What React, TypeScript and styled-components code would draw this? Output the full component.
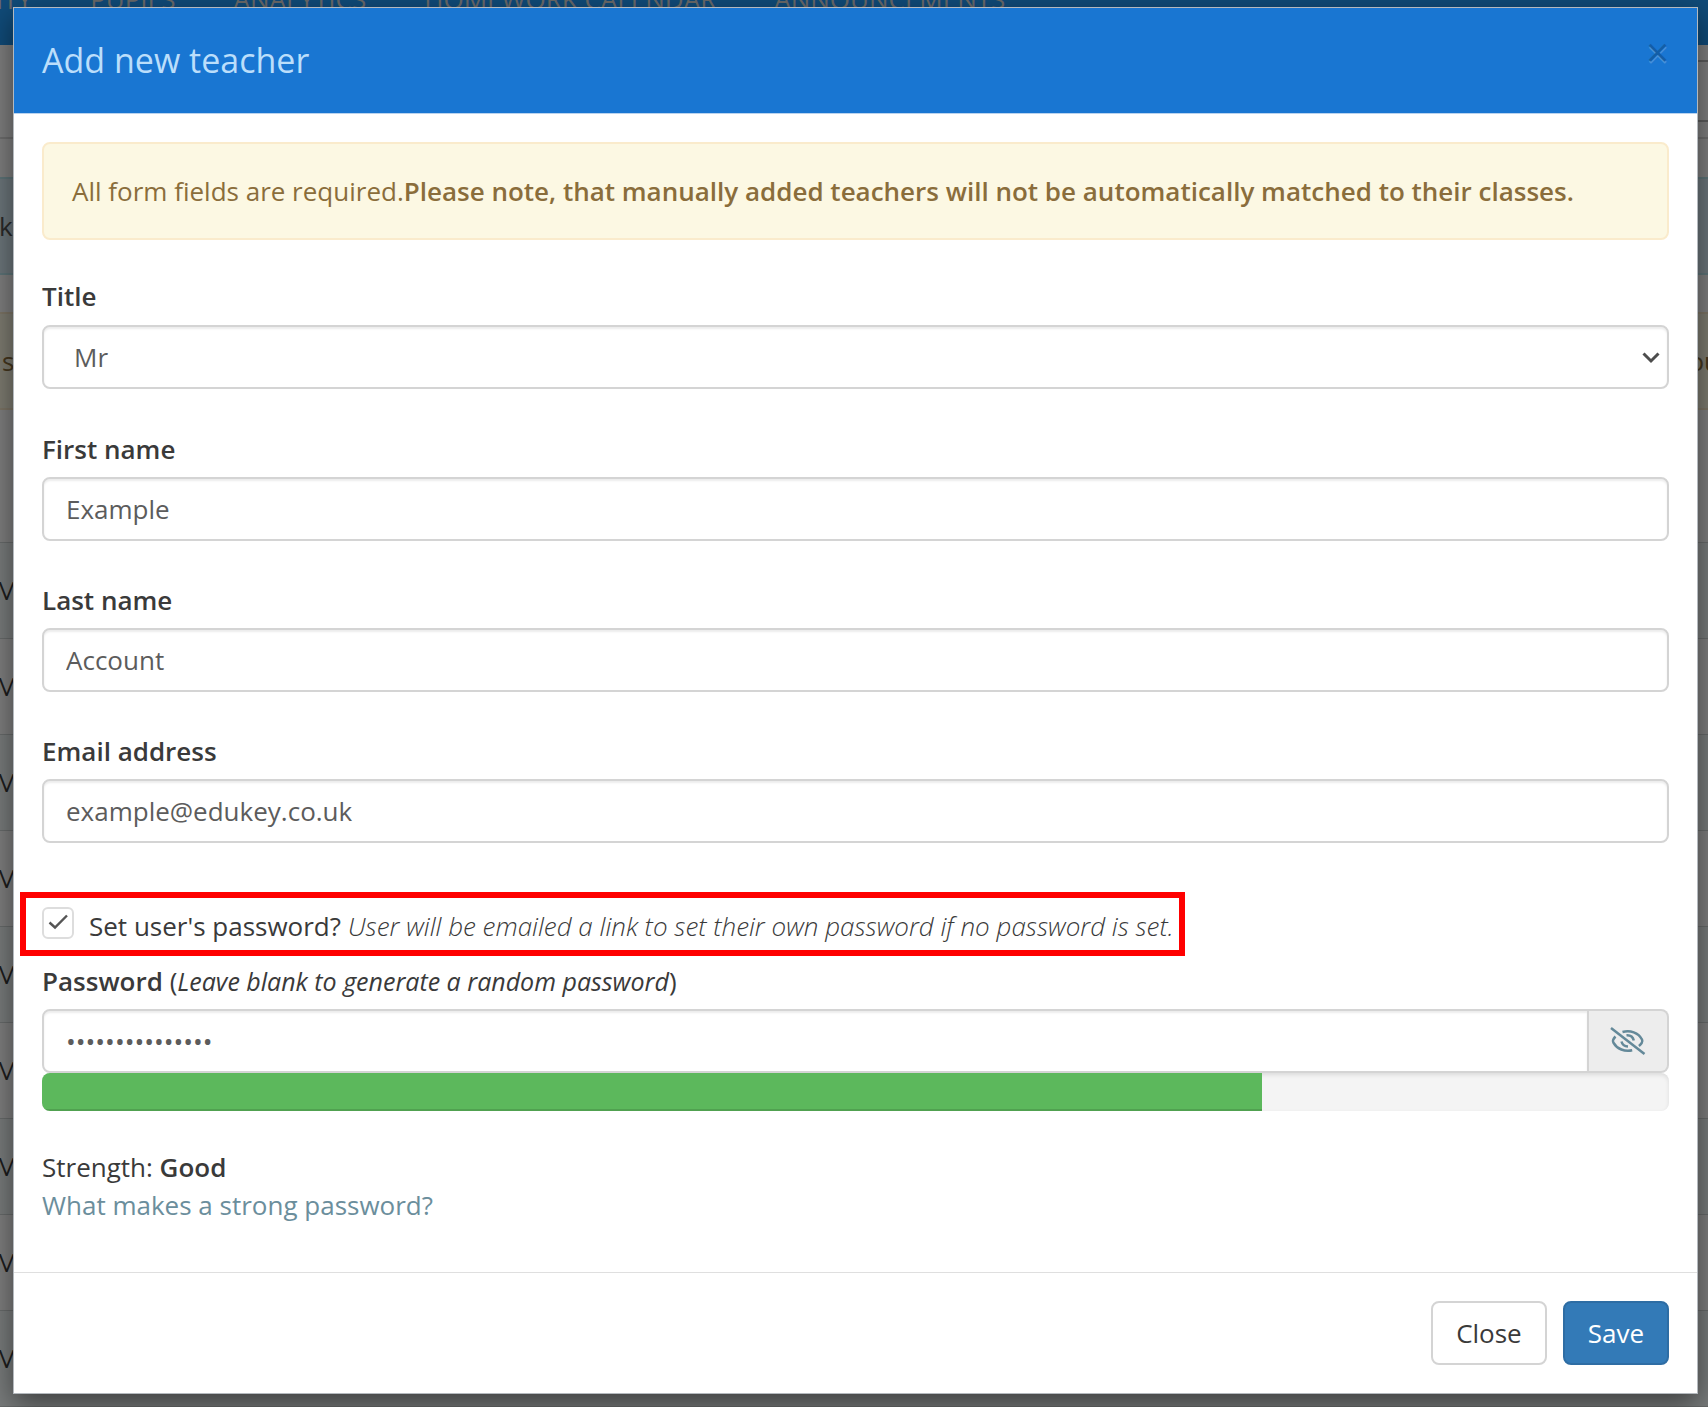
import React, { useState } from "react";
import styled, { createGlobalStyle } from "styled-components";

const GlobalStyle = createGlobalStyle`
  *, *::before, *::after { box-sizing: border-box; }
  body {
    margin: 0;
    color: #3a3a3a;
    background: #fff;
    font: 26px/38px "Open Sans", "Noto Sans", sans-serif;
  }
  button, input, select { font: inherit; margin: 0; }
`;

/* ---------- page under the dialog ---------- */

const Stage = styled.div`
  position: relative;
  min-height: 100vh;
`;

const Page = styled.div`
  position: absolute;
  inset: 0;
  overflow: hidden;
`;

const Backdrop = styled.div`
  position: absolute;
  inset: 0;
  background: rgba(0, 0, 0, 0.5);
`;

const NavBar = styled.nav`
  display: flex;
  align-items: center;
  gap: 58px;
  height: 93px;
  margin-top: -48px;
  background: #2196f3;
  color: #d5d5d5;
  white-space: nowrap;

  span:first-child {
    margin-left: -4px;
  }
`;

const ToolRow = styled.div`
  display: flex;
  justify-content: flex-end;
  padding: 15px 0;
  margin-bottom: 38px;
  border-bottom: 2px solid #ddd;
`;

const ToolBox = styled.div`
  width: 60px;
  height: 62px;
  border: 2px solid #bbb;
  border-right: 0;
`;

const Notice = styled.div<{ $tone: "info" | "warning" }>`
  display: flex;
  justify-content: space-between;
  margin: 0 -14px 37px;
  padding: 28px 0;
  border: 2px solid ${p => (p.$tone === "info" ? "#bce8f1" : "#faebcc")};
  background: ${p => (p.$tone === "info" ? "#d9edf7" : "#fcf8e3")};
  color: ${p => (p.$tone === "info" ? "#555" : "#8a6d3b")};

  span:first-child {
    margin-left: ${p => (p.$tone === "info" ? "11px" : "14px")};
  }
`;

const Rows = styled.div`
  margin-top: 132px;
`;

const Row = styled.div`
  height: 96px;
  padding: 28px 0;
  border-top: 1px solid #d0d6d6;
  text-indent: -5px;

  &:nth-child(odd) {
    background: #f2f8f8;
  }
`;

/* ---------- dialog ---------- */

const DialogArea = styled.div`
  position: relative;
  padding: 7px 10px 13px 13px;
`;

const Dialog = styled.div`
  border: 1px solid #b4b9be;
  background: #fff;
  box-shadow: 0 10px 28px rgba(0, 0, 0, 0.5);
`;

const Header = styled.header`
  display: flex;
  justify-content: space-between;
  align-items: flex-start;
  padding: 28px;
  border-bottom: 1px solid #b9d3ef;
  background: #1976d2;
`;

const Heading = styled.h4`
  margin: 0;
  color: #bbdefb;
  font-size: 34px;
  font-weight: 400;
  line-height: 49px;
`;

const Dismiss = styled.button`
  margin-top: -4px;
  padding: 0;
  border: 0;
  background: none;
  color: #000;
  font-size: 40px;
  line-height: 40px;
  text-shadow: 0 2px 0 #fff;
  opacity: 0.2;
  cursor: pointer;
`;

const Body = styled.div`
  padding: 28px;
`;

const Alert = styled.div`
  margin-bottom: 37px;
  padding: 28px;
  border: 2px solid #faebcc;
  border-radius: 8px;
  background: #fcf8e3;
  color: #8a6d3b;

  strong {
    font-weight: 600;
  }
`;

const Field = styled.div<{ $gap?: number }>`
  margin-bottom: ${p => p.$gap ?? 40}px;
`;

const Label = styled.label<{ $gap?: number }>`
  display: block;
  margin-bottom: ${p => p.$gap ?? 9}px;
  font-weight: 600;

  span {
    font-weight: 400;
  }

  em {
    font-size: 25px;
  }
`;

const TextInput = styled.input`
  display: block;
  width: 100%;
  height: 64px;
  padding: 0 22px;
  border: 2px solid #d4d4d4;
  border-radius: 8px;
  outline: 0;
  background: #fff;
  color: #5c5c5c;
  box-shadow: inset 0 2px 2px rgba(0, 0, 0, 0.075);
`;

const SelectWrap = styled.div`
  position: relative;

  svg {
    position: absolute;
    right: 8px;
    top: 26px;
    pointer-events: none;
  }
`;

const Select = styled(TextInput).attrs({ as: "select" })`
  appearance: none;
  padding: 0 30px;
`;

const CheckRow = styled.label`
  display: flex;
  align-items: flex-start;
  gap: 15px;
  width: fit-content;
  height: 64px;
  margin: 0 0 6px -22px;
  padding: 9px 5px 0 16px;
  border: 6px solid #f00;

  em {
    font-weight: 300;
  }
`;

const CheckMark = styled.span`
  display: grid;

  > * {
    grid-area: 1 / 1;
  }

  svg {
    pointer-events: none;
  }
`;

const CheckInput = styled.input`
  appearance: none;
  width: 32px;
  height: 32px;
  border: 2px solid #ddd;
  border-radius: 6px;
  background: #fff;

  &:not(:checked) + svg {
    visibility: hidden;
  }
`;

const InputGroup = styled.div`
  display: flex;
`;

const GroupInput = styled(TextInput)`
  flex: 1;
  width: auto;
  min-width: 0;
  border-radius: 8px 0 0 8px;
`;

const RevealButton = styled.button`
  display: flex;
  align-items: center;
  justify-content: center;
  width: 80px;
  padding: 0;
  border: 2px solid #d4d4d4;
  border-left: 0;
  border-radius: 0 8px 8px 0;
  background: #ededed;
  color: #648999;
  cursor: pointer;
`;

const Track = styled.div`
  height: 38px;
  margin-bottom: 37px;
  border-radius: 8px;
  overflow: hidden;
  background: #f4f4f4;
  box-shadow: inset 0 2px 4px rgba(0, 0, 0, 0.1);
`;

const Fill = styled.div`
  height: 100%;
  background: #5cb85c;
  box-shadow: inset 0 -2px 0 rgba(0, 0, 0, 0.12);
`;

const Strength = styled.div`
  margin-bottom: 20px;

  strong {
    font-weight: 600;
  }
`;

const HelpLink = styled.a`
  display: block;
  width: fit-content;
  color: #6b8e9c;
  text-decoration: none;
`;

const Footer = styled.footer`
  display: flex;
  justify-content: flex-end;
  gap: 16px;
  padding: 28px;
  border-top: 1px solid #dfdfdf;
`;

const Button = styled.button<{ $primary?: boolean }>`
  height: 64px;
  padding: 0 23px;
  border: 2px solid ${p => (p.$primary ? "#2e6da4" : "#d4d4d4")};
  border-radius: 8px;
  background: ${p => (p.$primary ? "#337ab7" : "#fff")};
  color: ${p => (p.$primary ? "#fff" : "#3a3a3a")};
  cursor: pointer;
`;

const ChevronDown = () => (
  <svg width="20" height="14" viewBox="0 0 20 14" fill="none" stroke="#4d4d4d" strokeWidth="3" aria-hidden="true">
    <path d="M2.5 2.5 10 10l7.5-7.5" />
  </svg>
);

const Tick = () => (
  <svg width="32" height="32" viewBox="0 0 32 32" fill="none" stroke="#555" strokeWidth="2.4" aria-hidden="true">
    <path d="M7.5 15.5 13 20.500 25 8.500" />
  </svg>
);

const EyeSlash = () => (
  <svg width="36" height="30" viewBox="0 0 36 30" fill="none" stroke="currentColor" strokeWidth="2.5" aria-hidden="true">
    <path d="M1 2 34.500 28" />
    <path d="M12.500 6C20 3.800 28.500 6.500 32 13.500c.6 1.300.4 2.500-.3 3.500-.8 1.200-1.700 2.200-2.800 3" />
    <path d="M5.500 10.500C4.500 11.500 3.700 12.600 3.200 13.700c-.5 1.100-.4 1.900.2 2.900 3.600 6.500 11.300 9.400 18.800 7.700" />
    <path d="M16.500 9.300c3.500-.2 6.500 1.700 7.300 5.200" />
    <path d="M11.500 15.500c.6 2.700 3 4.800 6.500 5" />
  </svg>
);

const navItems = ["ITY", "PUPILS", "ANALYTICS", "HOMEWORK CALENDAR", "ANNOUNCEMENTS"];

const textFields = [
  { id: "first-name", label: "First name", value: "Example", type: "text", gap: 40 },
  { id: "last-name", label: "Last name", value: "Account", type: "text", gap: 40 },
  { id: "email", label: "Email address", value: "example@edukey.co.uk", type: "email", gap: 49 },
];

const strength = 75;

export default function App() {
  const [revealed, setRevealed] = useState(false);

  return (
    <Stage>
      <GlobalStyle />
      <Page aria-hidden="true">
        <NavBar>
          {navItems.map(item => (
            <span key={item}>{item}</span>
          ))}
        </NavBar>
        <ToolRow>
          <ToolBox />
        </ToolRow>
        <Notice $tone="info">
          <span>k</span>
        </Notice>
        <Notice $tone="warning">
          <span>s</span>
          <span>ou</span>
        </Notice>
        <Rows>
          {Array.from({ length: 10 }, (_, i) => (
            <Row key={i}>M</Row>
          ))}
        </Rows>
      </Page>
      <Backdrop />

      <DialogArea>
        <Dialog role="dialog" aria-modal="true" aria-labelledby="dialog-heading">
          <Header>
            <Heading id="dialog-heading">Add new teacher</Heading>
            <Dismiss type="button" aria-label="Close">×</Dismiss>
          </Header>

          <Body>
            <Alert>
              All form fields are required.
              <strong>Please note, that manually added teachers will not be automatically matched to their classes.</strong>
            </Alert>

            <Field $gap={41}>
              <Label htmlFor="title" $gap={10}>Title</Label>
              <SelectWrap>
                <Select id="title" defaultValue="Mr">
                  <option>Mr</option>
                </Select>
                <ChevronDown />
              </SelectWrap>
            </Field>

            {textFields.map(f => (
              <Field key={f.id} $gap={f.gap}>
                <Label htmlFor={f.id}>{f.label}</Label>
                <TextInput id={f.id} type={f.type} defaultValue={f.value} />
              </Field>
            ))}

            <CheckRow htmlFor="set-password">
              <CheckMark>
                <CheckInput id="set-password" type="checkbox" defaultChecked />
                <Tick />
              </CheckMark>
              <span>
                Set user's password? <em>User will be emailed a link to set their own password if no password is set.</em>
              </span>
            </CheckRow>

            <Label htmlFor="password">
              Password <span>(<em>Leave blank to generate a random password</em>)</span>
            </Label>
            <InputGroup>
              <GroupInput id="password" type={revealed ? "text" : "password"} defaultValue="examplepassword" />
              <RevealButton type="button" aria-label="Show password" onClick={() => setRevealed(!revealed)}>
                <EyeSlash />
              </RevealButton>
            </InputGroup>
            <Track role="progressbar" aria-valuenow={strength} aria-valuemin={0} aria-valuemax={100}>
              <Fill style={{ width: `${strength}%` }} />
            </Track>

            <Strength>
              Strength: <strong>Good</strong>
              <HelpLink href="#">What makes a strong password?</HelpLink>
            </Strength>
          </Body>

          <Footer>
            <Button type="button">Close</Button>
            <Button type="submit" $primary>Save</Button>
          </Footer>
        </Dialog>
      </DialogArea>
    </Stage>
  );
}
